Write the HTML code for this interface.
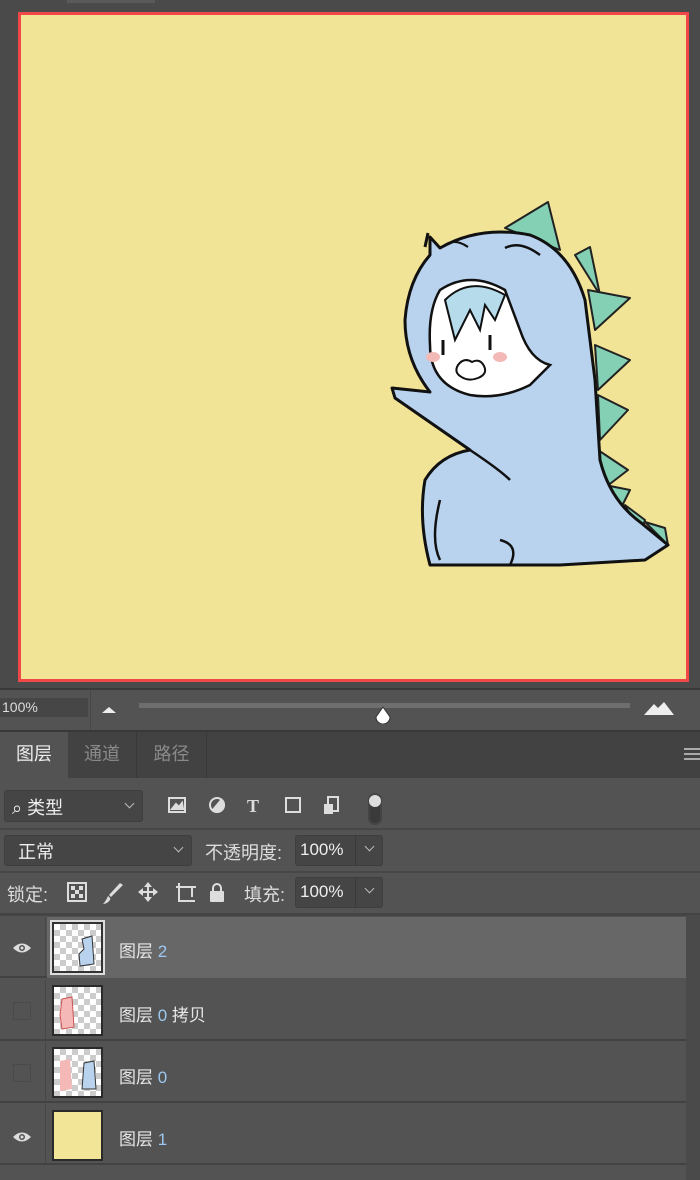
<!DOCTYPE html>
<html><head><meta charset="utf-8"><style>
*{margin:0;padding:0;box-sizing:border-box}
body{width:700px;height:1180px;background:#535353;position:relative;overflow:hidden;font-family:"Liberation Sans","Noto Sans CJK SC",sans-serif;color:#ddd}
.abs{position:absolute}
.cjk{font-family:"Liberation Sans","Noto Sans CJK SC",sans-serif}
.dd{position:absolute;background:#454545;border:1px solid #3e3e3e;border-radius:3px}
.chev{position:absolute;width:7px;height:7px;border-right:1.5px solid #bbb;border-bottom:1.5px solid #bbb;transform:rotate(45deg)}
.row{position:absolute;left:0;width:686px;height:61px;border-bottom:2px solid #424242}
.lc{position:absolute;left:0;top:0;width:46px;height:100%;border-right:1px solid #464646}
.thumb{position:absolute;left:52px;width:51px;height:51px;border:2px solid #2a2a2a;background-color:#fff;background-image:linear-gradient(45deg,#ccc 25%,transparent 25%,transparent 75%,#ccc 75%),linear-gradient(45deg,#ccc 25%,transparent 25%,transparent 75%,#ccc 75%);background-size:12px 12px;background-position:0 0,6px 6px}
.lname{position:absolute;left:119px;font-size:17px;color:#e6e6e6}
.lname b{font-weight:normal;color:#9cc8f0}
.eye{position:absolute;left:12px;width:20px;height:12px}
.cb{position:absolute;left:13px;width:18px;height:18px;border:1px solid #4a4a4a}
</style></head><body>
<!-- top canvas area -->
<div class="abs" style="left:0;top:0;width:700px;height:688px;background:#4a4a4a"></div>
<div class="abs" style="left:67px;top:0;width:88px;height:3px;background:#5a5a5a"></div>
<div class="abs" style="left:18px;top:12px;width:671px;height:670px;background:#f1e497;border:3px solid #f04848"></div>
<svg class="abs" style="left:0;top:0" width="700" height="688">
<g fill="#84d0b5" stroke="#222" stroke-width="2" stroke-linejoin="round">
<polygon points="505,228 548,202 560,250"/>
<polygon points="575,255 590,247 600,295"/>
<polygon points="588,290 630,298 595,330"/>
<polygon points="595,345 630,360 598,390"/>
<polygon points="598,395 628,410 600,440"/>
<polygon points="598,450 628,470 602,490"/>
<polygon points="605,485 630,490 615,520"/>
<polygon points="625,505 645,520 640,535"/>
<polygon points="645,522 665,528 668,545"/>
</g>
<path d="M430,237 L440,248 Q480,225 530,235 Q570,250 585,300 L595,380 L600,460 Q610,500 640,522 L668,545 L645,560 L560,565 L430,565 Q418,520 425,480 Q440,455 470,450 L395,398 L392,388 L430,392 Q405,360 405,320 Q408,280 430,255 Z" fill="#b9d3ef" stroke="#111" stroke-width="3" stroke-linejoin="round"/>
<path d="M425,247 L428,233" stroke="#111" stroke-width="3"/>
<path d="M440,290 Q470,270 505,290 L520,330 Q530,360 550,365 L530,385 Q500,400 470,395 Q430,385 430,345 Q428,310 440,290Z" fill="#fff" stroke="#111" stroke-width="2.5"/>
<path d="M445,300 Q470,275 505,295 L495,320 L485,305 L480,330 L470,310 L455,340 Z" fill="#b6dcec" stroke="#111" stroke-width="2"/>
<line x1="443" y1="340" x2="443" y2="355" stroke="#111" stroke-width="3"/>
<line x1="490" y1="335" x2="490" y2="350" stroke="#111" stroke-width="3"/>
<ellipse cx="433" cy="357" rx="7" ry="5" fill="#f2b9b6"/>
<ellipse cx="500" cy="357" rx="7" ry="5" fill="#f2b9b6"/>
<path d="M458,365 q6,-8 14,-3 q8,-4 12,4 q4,8 -6,12 q-10,4 -18,-2 q-6,-4 -2,-11z" fill="#fff" stroke="#111" stroke-width="2"/>
<path d="M505,248 Q520,240 540,255" fill="none" stroke="#111" stroke-width="2.5"/>
<path d="M445,245 Q455,238 468,247" fill="none" stroke="#111" stroke-width="2"/>
<path d="M470,450 Q500,470 510,480 M440,500 Q430,540 440,560 M500,540 Q520,545 510,565" fill="none" stroke="#111" stroke-width="2.5"/>
</svg>
<!-- zoom bar -->
<div class="abs" style="left:0;top:688px;width:700px;height:42px;background:#535353;border-top:2px solid #3a3a3a"></div>
<div class="abs" style="left:0;top:698px;width:88px;height:19px;background:#464646;font-size:14px;line-height:19px;color:#ddd;padding-left:2px">100%</div>
<div class="abs" style="left:90px;top:690px;width:1px;height:40px;background:#474747"></div>
<div class="abs" style="left:102px;top:707px;width:0;height:0;border-left:7px solid transparent;border-right:7px solid transparent;border-bottom:6px solid #eee"></div>
<div class="abs" style="left:139px;top:703px;width:491px;height:5px;background:#6e6e6e"></div>
<svg class="abs" style="left:374px;top:706px" width="18" height="18"><path d="M9,1 L16,11 A7,7 0 0 1 2,11 Z" fill="#fff" stroke="#333"/></svg>
<svg class="abs" style="left:644px;top:700px" width="32" height="16"><path d="M0,15 L10,4 L14,8 L20,2 L30,15Z" fill="#eee"/></svg>
<!-- tabs -->
<div class="abs" style="left:0;top:730px;width:700px;height:48px;background:#424242;border-top:2px solid #383838"></div>
<div class="abs" style="left:0;top:732px;width:68px;height:46px;background:#535353;font-size:18px;line-height:44px;text-align:center;color:#eee">图层</div>
<div class="abs" style="left:68px;top:732px;width:69px;height:46px;border-right:1px solid #383838;font-size:18px;line-height:44px;text-align:center;color:#8a8a8a">通道</div>
<div class="abs" style="left:137px;top:732px;width:70px;height:46px;border-right:1px solid #383838;font-size:18px;line-height:44px;text-align:center;color:#8a8a8a">路径</div>
<div class="abs" style="left:684px;top:748px;width:16px;height:12px;border-top:2px solid #aaa;border-bottom:2px solid #aaa"></div>
<div class="abs" style="left:684px;top:753px;width:16px;height:2px;background:#aaa"></div>
<!-- filter row -->
<div class="dd" style="left:4px;top:790px;width:139px;height:32px"></div>
<div class="abs" style="left:12px;top:794px;font-size:18px;color:#eee">⌕ 类型</div>
<div class="chev" style="left:126px;top:800px"></div>
<svg class="abs" style="left:165px;top:792px" width="230" height="36" fill="none" stroke="#ddd" stroke-width="2">
<rect x="4" y="6" width="16" height="14"/><path d="M7,17 L11,12 L14,15 L17,11 L18,17Z" fill="#ddd"/>
<circle cx="52" cy="13" r="7"/><path d="M52,6 A7,7 0 0 1 52,20 Z" fill="#ddd" transform="rotate(40 52 13)"/>
<text x="82" y="20" font-size="18" font-weight="bold" fill="#ddd" stroke="none" font-family="Liberation Serif">T</text>
<rect x="121" y="6" width="14" height="14"/>
<rect x="163" y="5" width="10" height="14"/><rect x="160" y="13" width="7" height="8" fill="#ddd"/>
<rect x="204" y="2" width="12" height="30" rx="6" stroke="#444" fill="#3a3a3a"/><circle cx="210" cy="9" r="6" fill="#ddd" stroke="none"/>
</svg>
<div class="abs" style="left:0;top:828px;width:700px;height:2px;background:#474747"></div>
<!-- blend row -->
<div class="dd" style="left:4px;top:835px;width:188px;height:31px"></div>
<div class="abs" style="left:18px;top:838px;font-size:18px;color:#eee">正常</div>
<div class="chev" style="left:175px;top:844px"></div>
<div class="abs" style="left:205px;top:839px;font-size:18px;color:#ddd">不透明度:</div>
<div class="dd" style="left:295px;top:835px;width:88px;height:31px"></div>
<div class="abs" style="left:355px;top:835px;width:1px;height:31px;background:#3a3a3a"></div>
<div class="abs" style="left:300px;top:840px;font-size:17px;color:#eee">100%</div>
<div class="chev" style="left:366px;top:843px"></div>
<div class="abs" style="left:0;top:871px;width:700px;height:2px;background:#474747"></div>
<!-- lock row -->
<div class="abs" style="left:7px;top:881px;font-size:18px;color:#ddd">锁定:</div>
<svg class="abs" style="left:66px;top:880px" width="170" height="26" fill="#ddd">
<rect x="2" y="3" width="18" height="18" fill="none" stroke="#ddd" stroke-width="2"/>
<rect x="5" y="6" width="4" height="4"/><rect x="13" y="6" width="4" height="4"/><rect x="9" y="10" width="4" height="4"/><rect x="5" y="14" width="4" height="4"/><rect x="13" y="14" width="4" height="4"/>
<path d="M54,3 L57,5 L45,17 L43,15Z"/><path d="M42,16 q3,2 2,4 q-3,4 -7,4 q3,-3 5,-8z"/>
<path d="M82,2 l4,5 h-3 v4 h4 v-3 l5,4 l-5,4 v-3 h-4 v4 h3 l-4,5 l-4,-5 h3 v-4 h-4 v3 l-5,-4 l5,-4 v3 h4 v-4 h-3z"/>
<path d="M110,7 h20 M113,3 v18 h16 M126,7 v10" fill="none" stroke="#ddd" stroke-width="2"/>
<rect x="144" y="11" width="14" height="11" rx="1"/><path d="M147,11 v-3 a4,4 0 0 1 8,0 v3" fill="none" stroke="#ddd" stroke-width="2"/>
</svg>
<div class="abs" style="left:244px;top:881px;font-size:18px;color:#ddd">填充:</div>
<div class="dd" style="left:295px;top:877px;width:88px;height:31px"></div>
<div class="abs" style="left:355px;top:877px;width:1px;height:31px;background:#3a3a3a"></div>
<div class="abs" style="left:300px;top:882px;font-size:17px;color:#eee">100%</div>
<div class="chev" style="left:366px;top:885px"></div>
<div class="abs" style="left:0;top:913px;width:700px;height:3px;background:#444"></div>
<!-- layers -->
<div class="row" style="top:917px;background:#535353"><div class="abs" style="left:47px;top:0;width:639px;height:61px;background:#676767"></div><div class="lc"></div>
<svg class="eye" style="top:25px" viewBox="0 0 20 12"><path d="M1,6 Q10,-3 19,6 Q10,15 1,6Z" fill="#ddd"/><circle cx="10" cy="6" r="3" fill="#535353"/><circle cx="10" cy="6" r="1.5" fill="#ddd"/></svg>
<div class="thumb" style="top:5px;border-color:#333;outline:2px solid #ddd"><svg width="47" height="47"><path d="M28,15 L38,12 L40,40 L26,42 L25,30 L30,25Z" fill="#b9d3ef" stroke="#333"/></svg></div>
<div class="lname" style="top:20px">图层 <b>2</b></div></div>
<div class="row" style="top:980px;background:#535353"><div class="lc"></div><div class="cb" style="top:22px"></div>
<div class="thumb" style="top:5px"><svg width="47" height="47"><path d="M8,12 L18,10 L20,40 L8,42 L6,28Z" fill="#f4b8b6" stroke="#c55"/></svg></div>
<div class="lname" style="top:21px">图层 <b>0</b> 拷贝</div></div>
<div class="row" style="top:1042px;background:#535353"><div class="lc"></div><div class="cb" style="top:22px"></div>
<div class="thumb" style="top:5px"><svg width="47" height="47"><path d="M6,12 L16,10 L18,40 L6,42Z" fill="#f4b8b6"/><path d="M30,14 L40,12 L42,40 L28,40Z" fill="#b9d3ef" stroke="#333"/></svg></div>
<div class="lname" style="top:21px">图层 <b>0</b></div></div>
<div class="row" style="top:1104px;background:#535353"><div class="lc"></div>
<svg class="eye" style="top:27px" viewBox="0 0 20 12"><path d="M1,6 Q10,-3 19,6 Q10,15 1,6Z" fill="#ddd"/><circle cx="10" cy="6" r="3" fill="#535353"/><circle cx="10" cy="6" r="1.5" fill="#ddd"/></svg>
<div class="thumb" style="top:6px;background:#f3e597"></div>
<div class="lname" style="top:21px">图层 <b>1</b></div></div>
<div class="abs" style="left:686px;top:915px;width:14px;height:265px;background:#4a4a4a"></div>
</body></html>
